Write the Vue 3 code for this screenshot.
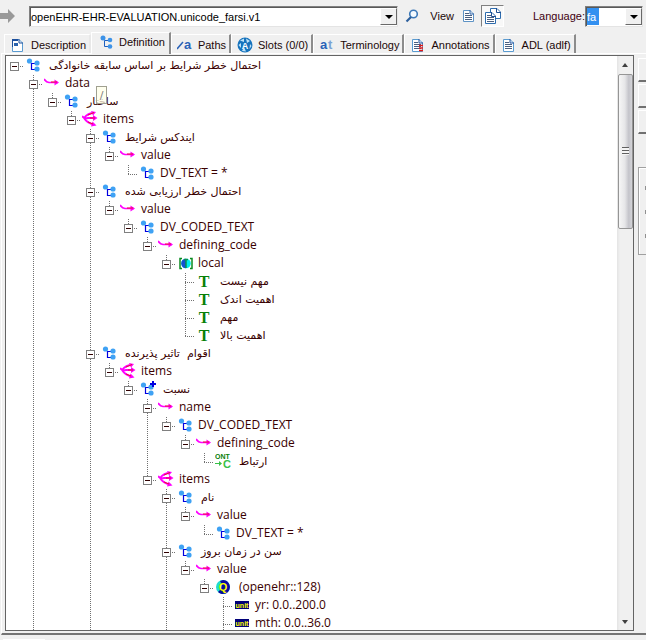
<script setup>
import { ref } from 'vue'

const archetype = ref('openEHR-EHR-EVALUATION.unicode_farsi.v1')
const language = ref('fa')

const tabs = [
  { label: 'Description', icon: 'form' },
  { label: 'Definition', icon: 'cluster', active: true },
  { label: 'Paths', icon: 'path' },
  { label: 'Slots (0/0)', icon: 'slot' },
  { label: 'Terminology', icon: 'term' },
  { label: 'Annotations', icon: 'note' },
  { label: 'ADL (adlf)', icon: 'page' },
]

// through: levels whose guide line runs past the row
const row = (level, icon, text, through = [], extra = {}) => ({ level, icon, text, through, ...extra })
const fa = { fa: true }
const leaf = { leaf: true }

const rows = [
  row(0, 'cluster', 'احتمال خطر شرایط بر اساس سابقه خانوادگی', [], fa),
  row(1, 'attr', 'data', [1]),
  row(2, 'cluster', 'ساختار', [1], { fa: true, hint: '/' }),
  row(3, 'multi', 'items', [1]),
  row(4, 'cluster', 'ایندکس شرایط', [1, 4], fa),
  row(5, 'attr', 'value', [1, 4]),
  row(6, 'cluster', 'DV_TEXT = *', [1, 4], leaf),
  row(4, 'cluster', 'احتمال خطر ارزیابی شده', [1, 4], fa),
  row(5, 'attr', 'value', [1, 4]),
  row(6, 'cluster', 'DV_CODED_TEXT', [1, 4]),
  row(7, 'attr', 'defining_code', [1, 4]),
  row(8, 'local', 'local', [1, 4]),
  row(9, 'code', 'مهم نیست', [1, 4, 9], { fa: true, leaf: true }),
  row(9, 'code', 'اهمیت اندک', [1, 4, 9], { fa: true, leaf: true }),
  row(9, 'code', 'مهم', [1, 4, 9], { fa: true, leaf: true }),
  row(9, 'code', 'اهمیت بالا', [1, 4], { fa: true, leaf: true }),
  row(4, 'cluster', 'اقوام  تاثیر پذیرنده', [1, 4], fa),
  row(5, 'multi', 'items', [1, 4]),
  row(6, 'plus', 'نسبت', [1, 4], fa),
  row(7, 'attr', 'name', [1, 4, 7]),
  row(8, 'cluster', 'DV_CODED_TEXT', [1, 4, 7]),
  row(9, 'attr', 'defining_code', [1, 4, 7]),
  row(10, 'ont', 'ارتباط', [1, 4, 7], { fa: true, leaf: true }),
  row(7, 'multi', 'items', [1, 4]),
  row(8, 'cluster', 'نام', [1, 4, 8], fa),
  row(9, 'attr', 'value', [1, 4, 8]),
  row(10, 'cluster', 'DV_TEXT = *', [1, 4, 8], leaf),
  row(8, 'cluster', 'سن در زمان بروز', [1, 4, 8], fa),
  row(9, 'attr', 'value', [1, 4, 8]),
  row(10, 'quantity', '(openehr::128)', [1, 4, 8], { inset: true }),
  row(11, 'unit', 'yr: 0.0..200.0', [1, 4, 8, 11], leaf),
  row(11, 'unit', 'mth: 0.0..36.0', [1, 4, 8, 11], leaf),
]
</script>

<template>
  <div class="app">
    <header class="toolbar">
      <button class="flat forward" aria-label="Forward">
        <svg width="16" height="14"><path d="M0 4H8V0L15 7L8 14V10H0Z" fill="#999" /></svg>
      </button>
      <div class="combo archetype">
        <select v-model="archetype" aria-label="Archetype">
          <option>openEHR-EHR-EVALUATION.unicode_farsi.v1</option>
        </select>
        <span class="drop"></span>
      </div>
      <button class="flat search" aria-label="Search">
        <svg width="14" height="14">
          <circle cx="8.5" cy="5" r="3.8" fill="#f4faff" stroke="#3c78b8" stroke-width="1.6" />
          <path d="M6 8L1.5 12.5" stroke="#2c5f9c" stroke-width="2.2" />
        </svg>
      </button>
      <span class="view">View</span>
      <button class="flat single" aria-label="Single view">
        <svg width="13" height="14">
          <path d="M1.5 1.5H8L11.5 5V12.5H1.5Z" fill="#fff" stroke="#5e93c5" />
          <path d="M3 4.5H7M3 6.5H10M3 8.5H10M3 10.5H10" stroke="#4a5f80" />
          <path d="M8 1V5H12" fill="none" stroke="#2c62a8" />
        </svg>
      </button>
      <button class="pressed" aria-label="Multiple views">
        <svg width="18" height="18">
          <path d="M6.500 1.500H13L16.500 5V11.500H6.500Z" fill="#fff" stroke="#2d6cae" />
          <path d="M12.500 1V5.500H17" fill="none" stroke="#1f4f94" />
          <path d="M1.500 5.500H8L11.500 9V16.500H1.500Z" fill="#fff" stroke="#2d6cae" />
          <path d="M3 8.500H7M3 10.500H10M3 12.500H10M3 14.500H10" stroke="#4a5f80" />
          <path d="M7.500 5V9.500H12" fill="none" stroke="#1f4f94" />
        </svg>
      </button>
      <label class="language" for="language">Language:</label>
      <div class="combo short">
        <select id="language" v-model="language"><option>fa</option></select>
        <span class="drop"></span>
      </div>
    </header>

    <nav class="tabs" role="tablist">
      <button v-for="t in tabs" :key="t.label" class="tab" :class="{ active: t.active }" role="tab" :aria-selected="!!t.active">
        <svg width="16" height="16" viewBox="0 0 16 16">
          <g v-if="t.icon === 'form'">
            <path d="M2.500 2.500H9L12.500 6V14.500H2.500Z" fill="#fff" stroke="#5a9bd0" />
            <path d="M2 2H8V4H2ZM2 2H3V10H2Z" fill="#1c4f9c" />
            <path d="M4 6H8V9H4Z" fill="#2b63ac" />
            <path d="M9 2V6H13" fill="none" stroke="#1c4f9c" />
          </g>
          <g v-else-if="t.icon === 'cluster'">
            <path d="M12 6.500H6.500V12.500H12" fill="none" stroke="#1c5fc0" />
            <circle cx="5" cy="4" r="2.500" fill="#3d93e8" />
            <circle cx="12" cy="6" r="2.300" fill="#3d93e8" />
            <circle cx="12" cy="12.500" r="2.300" fill="#3d93e8" />
          </g>
          <g v-else-if="t.icon === 'path'">
            <path d="M0 12L6 5" stroke="#2a62b8" stroke-width="1.500" />
            <text x="7" y="12" class="glyph blue">a</text>
          </g>
          <g v-else-if="t.icon === 'slot'">
            <circle cx="8" cy="8" r="7.500" fill="#1673bd" />
            <path d="M3 3.500L7 1.500V5ZM9 1.500L13 4L10 6ZM1.500 8L4 6V11ZM13 7L14.500 9L12.500 12ZM5 14L7 10L9 14.500Z" fill="#bfe2f7" />
            <text x="8" y="12" text-anchor="middle" class="glyph white">A</text>
          </g>
          <g v-else-if="t.icon === 'term'">
            <text x="1" y="12" class="glyph blue">a</text>
            <text x="9" y="12" class="glyph pale">t</text>
          </g>
          <g v-else>
            <path d="M2.500 2.500H9L12.500 6V14.500H2.500Z" fill="#fff" stroke="#5a9bd0" />
            <path d="M4 5.500H8M4 7.500H11M4 9.500H11M4 11.500H11" stroke="#4a5f80" />
            <path d="M9 2V6H13" fill="none" stroke="#1c4f9c" />
            <path v-if="t.icon === 'note'" d="M9 8.500H13M9 11H13M9 13.500H13" stroke="#e01818" stroke-width="1.500" />
          </g>
        </svg>
        <span>{{ t.label }}</span>
      </button>
    </nav>

    <main class="page">
      <section class="treebox">
        <ul class="tree" role="tree">
          <li v-for="(r, i) in rows" :key="i" class="row" role="treeitem" :aria-level="r.level + 1">
            <span v-for="n in r.level" :key="n" class="cell" :class="{ line: r.through.includes(n - 1) }"></span>
            <span class="cell own" :class="{ up: i > 0, line: r.through.includes(r.level) }">
              <button v-if="!r.leaf" class="expander" aria-label="Collapse"></button>
            </span>
            <svg class="icon" width="19" height="18" viewBox="1 0 19 18">
              <g v-if="r.icon === 'cluster' || r.icon === 'plus'">
                <path d="M13 6.500H7.500V12.500H13" fill="none" stroke="#0000e0" stroke-width="1.200" />
                <circle cx="5.500" cy="4" r="2.600" fill="#3fa2f4" />
                <circle cx="13" cy="6" r="2.600" fill="#3fa2f4" />
                <circle cx="13" cy="12" r="2.600" fill="#3fa2f4" />
                <path v-if="r.icon === 'plus'" d="M14 0H16V2H18V4H16V6H14V4H12V2H14Z" fill="#0000e0" />
              </g>
              <g v-else-if="r.icon === 'attr'" fill="none" stroke="#f0f">
                <path d="M1 4Q3 7 6 7.500H15" stroke-width="1.700" />
                <path d="M11.500 4.500L16 7.500L11.500 10.500Z" fill="#f0f" stroke="none" />
                <path d="M8 7H14" stroke="#f01030" />
              </g>
              <g v-else-if="r.icon === 'multi'" fill="none" stroke="#f0f">
                <path d="M1 5Q3 8 7 7H15M3 7Q7 2 13 2M3 7Q6 12 13 13.500" stroke-width="1.900" />
                <path d="M12 4L16.500 7L12 10ZM10 0L15 1L12 4.500ZM11.500 10.500L15.500 14.500L10 15.500Z" fill="#f0f" stroke="none" />
                <path d="M7 4L13 1.500M9 7H14M7 11L12 13" stroke="#f01030" />
              </g>
              <g v-else-if="r.icon === 'local'">
                <circle cx="10" cy="8.500" r="4.800" fill="#0ee" />
                <path d="M10 3.700A4.800 4.800 0 0 0 10 13.300Z" fill="#1450d0" />
                <path d="M6 3.500H4V13.500H6M14 3.500H16V13.500H14" fill="none" stroke="#0a8a20" stroke-width="1.500" />
                <path d="M10 4V13M8 4.500H12" stroke="#0a9050" stroke-width="1.500" />
              </g>
              <text v-else-if="r.icon === 'code'" x="9" y="14" text-anchor="middle" class="tee">T</text>
              <g v-else-if="r.icon === 'ont'">
                <text x="1" y="6" class="ont">ONT</text>
                <path d="M1 10.500H6" stroke="#38c048" />
                <path d="M5 8L8 10.500L5 13Z" fill="#38c048" />
                <text x="9" y="15" class="cee">C</text>
              </g>
              <g v-else-if="r.icon === 'quantity'">
                <circle cx="9" cy="8" r="7" fill="#20dcd0" />
                <path d="M9 1A7 7 0 1 1 4 13Q10 8 6 2Z" fill="#0808a0" />
                <text x="9" y="12" text-anchor="middle" class="queue">Q</text>
              </g>
              <g v-else>
                <rect x="2" y="4" width="14" height="8" fill="#000078" />
                <text x="9" y="11" text-anchor="middle" class="unit">unit</text>
              </g>
            </svg>
            <span class="label" :class="{ farsi: r.fa, inset: r.inset }" :dir="r.fa ? 'rtl' : 'ltr'" :lang="r.fa ? 'fa' : 'en'">{{ r.text }}<span v-if="r.hint" class="hint">{{ r.hint }}</span></span>
          </li>
        </ul>
        <div class="scrollbar">
          <i class="arrow up-arrow"></i>
          <div class="thumb"><i class="grip"></i></div>
          <i class="arrow down-arrow"></i>
        </div>
      </section>
      <aside class="side">
        <button class="sidebtn" aria-label="Action 1"></button>
        <button class="sidebtn" aria-label="Action 2"></button>
        <button class="sidebtn" aria-label="Action 3"></button>
        <div class="group"><i></i><i></i><i></i></div>
      </aside>
    </main>
    <footer class="foot"><div class="status"></div></footer>
  </div>
</template>

<style>
body {
  margin: 0;
  background: #f0f0f0;
}
</style>

<style scoped>
* {
  box-sizing: border-box;
}
.app {
  display: flex;
  flex-direction: column;
  height: 100vh;
  overflow: hidden;
  background: #f0f0f0;
  color: #200808;
  font: 11px/16px "Liberation Sans", Arial, sans-serif;
}
button {
  font: inherit;
  color: inherit;
  padding: 0;
  margin: 0;
  border: 0;
  background: none;
}
svg {
  display: block;
  flex: none;
}
.toolbar {
  display: flex;
  align-items: center;
  height: 32px;
  flex: none;
  padding-right: 3px;
  white-space: nowrap;
}
.forward {
  margin-right: 13px;
}
.combo {
  position: relative;
  height: 21px;
  background: #fff;
  border: 1px solid;
  border-color: #808080 #e4e4e4 #e4e4e4 #808080;
  box-shadow: inset 1px 1px #585858;
}
.combo select {
  appearance: none;
  display: block;
  width: 100%;
  height: 19px;
  padding: 1px 18px 0 1px;
  border: 0;
  outline: 0;
  background: transparent;
  color: #000;
  font: inherit;
}
.archetype {
  flex: 1;
}
.short {
  width: 58px;
}
.combo.short select {
  background: linear-gradient(#3390f0, #3390f0) 1px 1px / 12px 17px no-repeat;
  color: #fff;
}
.drop {
  position: absolute;
  top: 1px;
  right: 0;
  width: 17px;
  height: 17px;
  background: #f0f0f0;
  border: 1px solid;
  border-color: #fff #696969 #696969 #fff;
  pointer-events: none;
}
.drop::after {
  content: "";
  position: absolute;
  left: 4px;
  top: 6px;
  border: 4px solid transparent;
  border-top-color: #000;
  border-bottom: 0;
}
.search {
  margin: 0 11px 0 7px;
}
.single {
  margin: 0 6px 0 8px;
}
.pressed {
  display: grid;
  place-items: center;
  width: 23px;
  height: 22px;
  background: #f8f8f8;
  border: 1px solid;
  border-color: #808080 #fff #fff #808080;
}
.language {
  margin: 0 0 0 29px;
  color: #400010;
}
.tabs {
  display: flex;
  align-items: flex-end;
  height: 21px;
  flex: none;
  padding-left: 4px;
}
.tab {
  display: flex;
  align-items: center;
  gap: 5px;
  height: 19px;
  padding: 2px 3px 0 5px;
  white-space: nowrap;
  border-top: 1px solid #fff;
  border-left: 1px solid #fff;
  border-right: 2px solid #8c8c8c;
}
.tab:first-child {
  border-right-color: #e8e8e8;
}
.tab.active {
  height: 22px;
  margin-bottom: -1px;
  padding: 0 4px 3px 6px;
  background: #f0f0f0;
  position: relative;
}
.glyph {
  font: bold 13px "Liberation Sans", sans-serif;
}
.blue {
  fill: #2a62b8;
}
.pale {
  fill: #7ba4d4;
}
.white {
  fill: #fff;
  font-size: 9px;
}
.page {
  display: flex;
  flex: 1;
  min-height: 0;
  margin-left: 1px;
  padding: 1px 0 2px 3px;
  border-top: 1px solid #fff;
  border-left: 1px solid #fff;
  border-bottom: 2px solid #747474;
}
.treebox {
  display: flex;
  flex: 1;
  min-width: 0;
  background: #fff;
  border: 1px solid #646464;
  overflow: hidden;
}
.tree {
  flex: 1;
  min-width: 0;
  margin: 0;
  padding: 1px 0 0;
  list-style: none;
  overflow: hidden;
}
.row {
  display: flex;
  height: 18px;
  white-space: nowrap;
}
.cell {
  position: relative;
  flex: none;
  width: 19px;
}
.cell.line::before,
.cell.up::before {
  content: "";
  position: absolute;
  left: 8px;
  top: 0;
  width: 1px;
  height: 10px;
  background: repeating-linear-gradient(#707070 0 1px, transparent 1px 2px);
}
.cell.line::before {
  height: 18px;
}
.own::after {
  content: "";
  position: absolute;
  left: 8px;
  top: 9px;
  width: 10px;
  height: 1px;
  background: repeating-linear-gradient(90deg, #707070 0 1px, transparent 1px 2px);
}
.expander {
  position: absolute;
  z-index: 1;
  left: 4px;
  top: 5px;
  width: 9px;
  height: 9px;
  border: 1px solid #808080;
  background: linear-gradient(#300000, #300000) center / 5px 1px no-repeat #fff;
}
.label {
  position: relative;
  height: 16px;
  padding-left: 2px;
  color: #3a0000;
  font: 12px/16px "Open Sans", "Noto Sans", sans-serif;
}
.farsi {
  height: 18px;
  padding-left: 5px;
  font: 11px/18px "DejaVu Sans", sans-serif;
  white-space: pre;
}
.inset {
  padding-left: 5px;
}
.hint {
  position: absolute;
  left: 14px;
  top: -7px;
  width: 11px;
  height: 18px;
  border: 1px solid #a0a090;
  background: rgba(255, 255, 232, 0.75);
  color: #808080;
  text-align: center;
}
.tee {
  font: bold 16px "Liberation Serif", serif;
  fill: #078007;
}
.ont {
  font: bold 7px "Liberation Sans", sans-serif;
  fill: #078007;
}
.cee {
  font: bold 11px "Liberation Sans", sans-serif;
  fill: #38c048;
}
.queue {
  font: bold 11px "Liberation Sans", sans-serif;
  fill: #ff0;
}
.unit {
  font: bold 7px "Liberation Sans", sans-serif;
  fill: #ff0;
}
.scrollbar {
  display: flex;
  flex-direction: column;
  align-items: center;
  width: 16px;
  flex: none;
  background: linear-gradient(90deg, #e4e4e4, #f0f0f0 3px, #f0f0f0);
}
.arrow {
  width: 0;
  height: 0;
  border: 3px solid transparent;
}
.up-arrow {
  margin: 7px 0 8px;
  border-top: 0;
  border-bottom: 4px solid #404040;
}
.down-arrow {
  margin: auto 0 6px;
  border-bottom: 0;
  border-top: 4px solid #404040;
}
.thumb {
  display: grid;
  place-items: center;
  width: 15px;
  height: 27%;
  margin-top: -1px;
  border: 1px solid #959595;
  border-radius: 2px;
  background: linear-gradient(90deg, #f6f6f6, #e6e6e8 45%, #c4c4ca 75%, #d4d4d8);
}
.grip {
  width: 7px;
  height: 8px;
  background: repeating-linear-gradient(#606060 0 1px, #f4f4f4 1px 3px);
}
.side {
  flex: none;
  width: 12px;
  padding: 3px 0 0 4px;
}
.sidebtn {
  display: block;
  width: 100%;
  height: 24px;
  margin-bottom: 2px;
  border: 1px solid #fff;
  border-right: 0;
  border-bottom: 2px solid #707070;
}
.group {
  display: flex;
  flex-direction: column;
  align-items: flex-end;
  gap: 20px;
  height: 88px;
  margin-top: 33px;
  padding-top: 18px;
  border: 1px solid #a0a0a0;
  border-right: 0;
  box-shadow: inset 1px 1px #fff;
}
.group i {
  width: 1px;
  height: 4px;
  background: #909090;
}
.foot {
  flex: none;
  height: 5px;
  padding: 4px 0 0 3px;
}
.status {
  width: 42px;
  height: 1px;
  background: #fff;
}
</style>
